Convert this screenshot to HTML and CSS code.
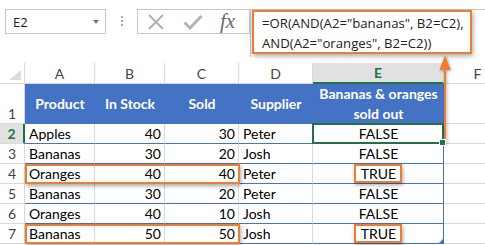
FILE: index.html
```html
<!DOCTYPE html>
<html lang="en">
<head>
  <meta charset="UTF-8">
  <title>OR AND formula</title>
  <link rel="stylesheet" href="styles.css">
</head>
<body>

<div class="formula-bar">
  <div class="name-box">
    <span>E2</span>
    <span class="caret"></span>
  </div>
  <div class="grip"><i></i><i></i><i></i></div>
  <div class="fx-buttons">
    <svg class="btn-icon" width="18" height="16" viewBox="0 0 18 16">
      <path d="M2 1 L16 15 M16 1 L2 15" stroke="#b4b4b4" stroke-width="2.2" fill="none"/>
    </svg>
    <svg class="btn-icon" width="20" height="16" viewBox="0 0 20 16">
      <path d="M1.5 8.5 L7 14 L18.5 2" stroke="#b4b4b4" stroke-width="3" fill="none"/>
    </svg>
    <span class="fx">fx</span>
  </div>
  <div class="formula-input">
    <div class="callout">=OR(AND(A2="bananas", B2=C2),<br>AND(A2="oranges", B2=C2))</div>
  </div>
</div>

<div class="sheet">
  <div class="corner"><span class="tri"></span></div>
  <div class="col-head">A</div>
  <div class="col-head">B</div>
  <div class="col-head">C</div>
  <div class="col-head">D</div>
  <div class="col-head selected">E</div>
  <div class="col-head last">F</div>

  <div class="row-head">1</div>
  <div class="th">Product</div>
  <div class="th">In Stock</div>
  <div class="th">Sold</div>
  <div class="th">Supplier</div>
  <div class="th last">Bananas &amp; oranges<br>sold out</div>
  <div class="cell"></div>

  <div class="row-head selected">2</div>
  <div class="td">Apples</div>
  <div class="td num">40</div>
  <div class="td num">30</div>
  <div class="td">Peter</div>
  <div class="td mid last active">FALSE</div>
  <div class="cell"></div>

  <div class="row-head">3</div>
  <div class="td">Bananas</div>
  <div class="td num">30</div>
  <div class="td num">20</div>
  <div class="td">Josh</div>
  <div class="td mid last">FALSE</div>
  <div class="cell"></div>

  <div class="row-head">4</div>
  <div class="td">Oranges</div>
  <div class="td num">40</div>
  <div class="td num">40</div>
  <div class="td">Peter</div>
  <div class="td mid last">TRUE</div>
  <div class="cell"></div>

  <div class="row-head">5</div>
  <div class="td">Bananas</div>
  <div class="td num">30</div>
  <div class="td num">20</div>
  <div class="td">Peter</div>
  <div class="td mid last">FALSE</div>
  <div class="cell"></div>

  <div class="row-head">6</div>
  <div class="td">Oranges</div>
  <div class="td num">40</div>
  <div class="td num">10</div>
  <div class="td">Josh</div>
  <div class="td mid last">FALSE</div>
  <div class="cell"></div>

  <div class="row-head">7</div>
  <div class="td">Bananas</div>
  <div class="td num">50</div>
  <div class="td num">50</div>
  <div class="td">Josh</div>
  <div class="td mid last end">TRUE</div>
  <div class="cell"></div>

  <!-- highlight marks -->
  <div class="mark row-mark r4"></div>
  <div class="mark true-mark r4"></div>
  <div class="mark row-mark r7"></div>
  <div class="mark true-mark r7"></div>
</div>

<svg class="arrow" width="14" height="92" viewBox="0 0 14 92">
  <path d="M7 10 L7 90" stroke="#ed7d31" stroke-width="2"/>
  <path d="M7 1 L1.5 16 L12.5 16 Z" fill="#ed7d31"/>
</svg>

</body>
</html>
```

FILE: styles.css
```css
body {
  margin: 0;
  width: 485px;
  height: 245px;
  overflow: hidden;
  background: #fff;
  font-family: Lato, "Liberation Sans", sans-serif;
  position: relative;
}
.formula-bar {
  display: flex;
  align-items: flex-start;
  height: 63px;
}
.name-box {
  margin: 9px 0 0 5px;
  width: 101px;
  height: 25px;
  box-sizing: border-box;
  border: 1px solid #c6c6c6;
  display: flex;
  align-items: center;
  justify-content: space-between;
  padding: 0 6px 0 7px;
  font-family: "Open Sans", sans-serif;
  font-size: 13px;
  color: #222;
}
.caret {
  width: 0;
  height: 0;
  border-left: 3.5px solid transparent;
  border-right: 3.5px solid transparent;
  border-top: 4px solid #777;
}
.grip {
  margin: 16px 0 0 15px;
  width: 3px;
  display: flex;
  flex-direction: column;
  gap: 2px;
}
.grip i {
  width: 2px;
  height: 2px;
  background: #a6a6a6;
}
.fx-buttons {
  margin: 9px 0 0 13px;
  width: 113px;
  height: 25px;
  box-sizing: border-box;
  border: 1px solid #c6c6c6;
  display: flex;
  align-items: center;
  padding-left: 9px;
  gap: 18px;
}
.fx {
  font-family: "Liberation Serif", serif;
  font-style: italic;
  font-size: 21px;
  color: #6a6a6a;
  margin-left: -1px;
  line-height: 1;
}
.formula-input {
  flex: 1;
  margin-top: 9px;
  height: 47px;
  border-top: 1px solid #c6c6c6;
  border-left: 1px solid #c6c6c6;
  padding: 0 0 0 1px;
}
.callout {
  width: 220px;
  height: 44px;
  box-sizing: border-box;
  border: 2.5px solid #ed7d31;
  box-shadow: 1px 2px 5px rgba(0, 0, 0, 0.35);
  background: #fff;
  padding: 1px 0 0 8px;
  font-family: "Open Sans", sans-serif;
  font-size: 13.2px;
  line-height: 20px;
  color: #222;
  white-space: nowrap;
}
.sheet {
  position: relative;
  display: grid;
  grid-template-columns: 25px 70px 70px 74px 74px 131px 1fr;
  grid-template-rows: 21px 40px repeat(6, 20px);
  font-size: 14px;
  color: #000;
}
.sheet > div {
  box-sizing: border-box;
}
.corner, .col-head, .row-head, .cell {
  border-right: 1px solid #d9d9d9;
  border-bottom: 1px solid #d9d9d9;
}
.cell {
  border-right: none;
}
.corner {
  position: relative;
}
.tri {
  position: absolute;
  right: 3px;
  bottom: 3px;
  width: 0;
  height: 0;
  border-left: 12px solid transparent;
  border-bottom: 10px solid #dadada;
}
.col-head {
  display: flex;
  align-items: center;
  justify-content: center;
  color: #444;
  font-size: 14px;
}
.col-head.last {
  border-right: none;
  padding-left: 26px;
}
.col-head.selected {
  background: #e1e1e1;
  color: #217346;
  font-weight: bold;
  border-bottom: 2px solid #217346;
}
.row-head {
  display: flex;
  align-items: flex-end;
  justify-content: center;
  color: #444;
  font-size: 14px;
  padding-bottom: 1px;
}
.row-head.selected {
  background: #e1e1e1;
  color: #217346;
  font-weight: bold;
  border-right: 2px solid #217346;
}
.th {
  background: #4472c4;
  color: #fff;
  font-weight: bold;
  font-size: 14px;
  line-height: 20px;
  text-align: center;
  display: flex;
  align-items: center;
  justify-content: center;
}
.td {
  border-right: 1px solid #d9d9d9;
  border-bottom: 1px solid #4472c4;
  padding: 0 3px 0 4px;
  line-height: 19px;
  white-space: nowrap;
}
.td.num {
  text-align: right;
}
.td.mid {
  text-align: center;
}
.td.last {
  border-right: 1px solid #4472c4;
}
.td.active {
  position: relative;
}
.td.active::after {
  content: "";
  position: absolute;
  left: -1px;
  top: -1px;
  right: -1px;
  bottom: -1px;
  border: 2px solid #217346;
}
.td.active::before {
  content: "";
  position: absolute;
  right: -3px;
  bottom: -3px;
  width: 5px;
  height: 5px;
  background: #217346;
  border: 1px solid #fff;
  z-index: 1;
}
.td.end {
  position: relative;
}
.td.end::after {
  content: "";
  position: absolute;
  right: 0;
  bottom: 0;
  width: 0;
  height: 0;
  border-left: 4px solid transparent;
  border-bottom: 4px solid #4472c4;
}
.mark {
  position: absolute;
  box-sizing: border-box;
  border: 2px solid #ed7d31;
  box-shadow: 1px 2px 4px rgba(0, 0, 0, 0.35);
}
.row-mark {
  left: 25px;
  width: 215px;
  height: 20px;
}
.true-mark {
  left: 354px;
  width: 48px;
  height: 19px;
}
.r4 {
  top: 101px;
}
.r7 {
  top: 161px;
}
.arrow {
  position: absolute;
  left: 438px;
  top: 54px;
  filter: drop-shadow(1px 1px 1.5px rgba(0, 0, 0, 0.35));
}
```
